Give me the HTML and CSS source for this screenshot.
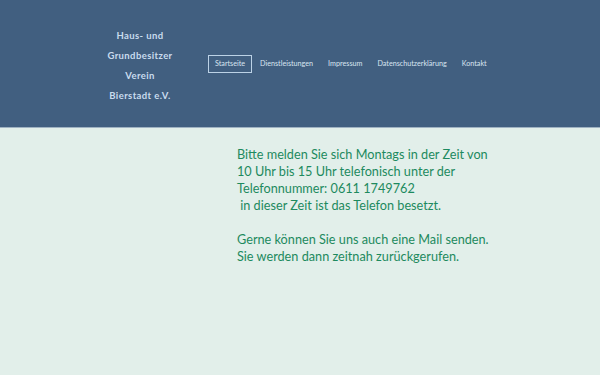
FILE: index.html
```html
<!DOCTYPE html>
<html lang="de">
<head>
    <meta charset="UTF-8">
    <meta name="viewport" content="width=device-width, initial-scale=1.0">
    <title>Haus- und Grundbesitzer Verein Bierstadt e.V.</title>
    <link rel="stylesheet" href="styles.css">
</head>
<body>

    <header class="kopf">
        <div class="logo">
            <p>Haus- und</p>
            <p>Grundbesitzer</p>
            <p>Verein</p>
            <p>Bierstadt e.V.</p>
        </div>
        <nav class="menu">
            <a href="#" class="aktiv">Startseite</a>
            <a href="#">Dienstleistungen</a>
            <a href="#">Impressum</a>
            <a href="#">Datenschutzerklärung</a>
            <a href="#">Kontakt</a>
        </nav>
    </header>

    <main class="inhalt">
        <p>
            Bitte melden Sie sich Montags in der Zeit von<br>
            10 Uhr bis 15 Uhr telefonisch unter der<br>
            Telefonnummer: 0611 1749762<br>
            &nbsp;in dieser Zeit ist das Telefon besetzt.
        </p>
        <p>
            Gerne können Sie uns auch eine Mail senden.<br>
            Sie werden dann zeitnah zurückgerufen.
        </p>
    </main>

</body>
</html>
```

FILE: styles.css
```css
*{
    margin: 0;
    padding: 0;
    box-sizing: border-box;
}

html, body{
    height: 100%;
}

body{
    background-color: #e2efea;
    font-family: Lato, "Open Sans", sans-serif;
}

.kopf{
    height: 128px;
    background-color: #415f80;
    border-bottom: 1px solid #9fb2c2;
    display: flex;
    align-items: flex-start;
    padding-left: 80px;
}

.logo{
    width: 120px;
    padding-top: 26px;
    text-align: center;
    color: #c9dcee;
    font-size: 9.5px;
    font-weight: 700;
    letter-spacing: 0.4px;
    line-height: 20px;
}

.menu{
    display: flex;
    gap: 1px;
    margin-top: 55px;
    margin-left: 8px;
}

.menu a{
    display: block;
    padding: 0 6px;
    height: 18px;
    line-height: 16px;
    font-size: 7.2px;
    color: #d8e5f1;
    text-decoration: none;
    border: 1px solid transparent;
}

.menu a.aktiv{
    border-color: #bcd2e6;
}

.inhalt{
    padding: 18px 0 0 237px;
    color: #1d8a5e;
    font-size: 12.7px;
    line-height: 17px;
}

.inhalt p + p{
    margin-top: 17px;
}
```
